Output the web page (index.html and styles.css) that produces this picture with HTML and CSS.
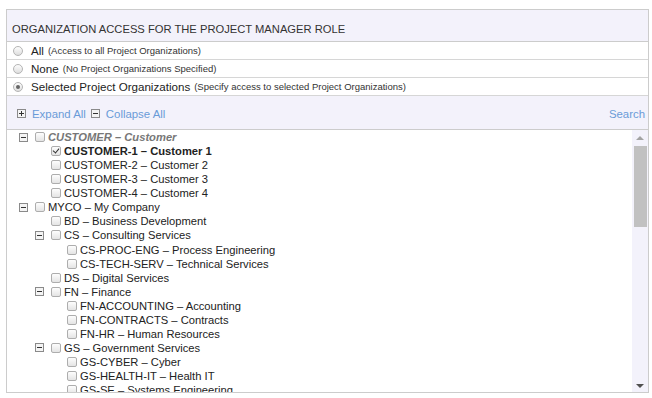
FILE: index.html
```html
<!DOCTYPE html>
<html lang="en">
<head>
  <meta charset="UTF-8">
  <title>Organization Access</title>
  <link rel="stylesheet" href="styles.css">
</head>
<body>
  <div class="access-box">
    <div class="access-header">Organization Access for the Project Manager Role</div>

    <div class="radio-row"><span class="radio"></span><span class="label">All</span><span class="hint">(Access to all Project Organizations)</span></div>
    <div class="radio-row"><span class="radio"></span><span class="label">None</span><span class="hint">(No Project Organizations Specified)</span></div>
    <div class="radio-row"><span class="radio checked"></span><span class="label">Selected Project Organizations</span><span class="hint">(Specify access to selected Project Organizations)</span></div>

    <div class="toolbar">
      <span class="tool"><span class="tog plus"></span>Expand All</span>
      <span class="tool"><span class="tog"></span>Collapse All</span>
      <span class="search">Search</span>
    </div>

    <div class="tree-wrap">
      <div class="tree">
        <div class="node l0 head"><span class="tog"></span><span class="cb"></span><span class="name">CUSTOMER – Customer</span></div>
        <div class="node l1 selected"><span class="slot"></span><span class="cb on"></span><span class="name">CUSTOMER-1 – Customer 1</span></div>
        <div class="node l1"><span class="slot"></span><span class="cb"></span><span class="name">CUSTOMER-2 – Customer 2</span></div>
        <div class="node l1"><span class="slot"></span><span class="cb"></span><span class="name">CUSTOMER-3 – Customer 3</span></div>
        <div class="node l1"><span class="slot"></span><span class="cb"></span><span class="name">CUSTOMER-4 – Customer 4</span></div>
        <div class="node l0"><span class="tog"></span><span class="cb"></span><span class="name">MYCO – My Company</span></div>
        <div class="node l1"><span class="slot"></span><span class="cb"></span><span class="name">BD – Business Development</span></div>
        <div class="node l1"><span class="tog"></span><span class="cb"></span><span class="name">CS – Consulting Services</span></div>
        <div class="node l2"><span class="slot"></span><span class="cb"></span><span class="name">CS-PROC-ENG – Process Engineering</span></div>
        <div class="node l2"><span class="slot"></span><span class="cb"></span><span class="name">CS-TECH-SERV – Technical Services</span></div>
        <div class="node l1"><span class="slot"></span><span class="cb"></span><span class="name">DS – Digital Services</span></div>
        <div class="node l1"><span class="tog"></span><span class="cb"></span><span class="name">FN – Finance</span></div>
        <div class="node l2"><span class="slot"></span><span class="cb"></span><span class="name">FN-ACCOUNTING – Accounting</span></div>
        <div class="node l2"><span class="slot"></span><span class="cb"></span><span class="name">FN-CONTRACTS – Contracts</span></div>
        <div class="node l2"><span class="slot"></span><span class="cb"></span><span class="name">FN-HR – Human Resources</span></div>
        <div class="node l1"><span class="tog"></span><span class="cb"></span><span class="name">GS – Government Services</span></div>
        <div class="node l2"><span class="slot"></span><span class="cb"></span><span class="name">GS-CYBER – Cyber</span></div>
        <div class="node l2"><span class="slot"></span><span class="cb"></span><span class="name">GS-HEALTH-IT – Health IT</span></div>
        <div class="node l2"><span class="slot"></span><span class="cb"></span><span class="name">GS-SE – Systems Engineering</span></div>
      </div>
      <div class="scrollbar">
        <span class="arrow up"></span>
        <div class="track"><div class="thumb"></div></div>
        <span class="arrow down"></span>
      </div>
    </div>
  </div>
</body>
</html>
```

FILE: styles.css
```css
/* Global Styles */
* {
  margin: 0;
  padding: 0;
  box-sizing: border-box;
}

body {
  background: #fff;
  font-family: 'Liberation Sans', Arial, sans-serif;
  color: #333;
  padding: 9px 4px 0 6px;
}

.access-box {
  width: 643px;
  border: 1px solid #ccc;
}

/* Header */
.access-header {
  height: 32px;
  background: #f3f2fb;
  border-bottom: 1px solid #ccc;
  padding: 12px 0 0 5px;
  font-size: 11.2px;
  line-height: 14px;
  text-transform: uppercase;
  color: #333;
}

/* Radio rows */
.radio-row {
  height: 18px;
  display: flex;
  align-items: center;
  border-bottom: 1px solid #d6d6d6;
  padding-left: 6px;
  font-size: 11.6px;
  color: #222;
}

.radio {
  width: 10px;
  height: 10px;
  border-radius: 50%;
  border: 1px solid #b4b4b4;
  background: linear-gradient(#fdfdfd, #dedede);
  margin-right: 8px;
  position: relative;
}

.radio.checked::after {
  content: '';
  position: absolute;
  left: 2px;
  top: 2px;
  width: 4px;
  height: 4px;
  border-radius: 50%;
  background: #666;
}

.label {
  margin-right: 4px;
}

.hint {
  font-size: 9.5px;
  color: #333;
}

/* Toolbar */
.toolbar {
  height: 34px;
  background: #f3f2fb;
  border-bottom: 1px solid #ccc;
  display: flex;
  align-items: center;
  padding: 2px 3px 0 10px;
  font-size: 11.4px;
  color: #6a9bd8;
}

.tool {
  display: flex;
  align-items: center;
  margin-right: 5px;
}

.tool .tog {
  margin-right: 6px;
}

.search {
  margin-left: auto;
}

/* Toggle squares */
.tog {
  width: 9px;
  height: 9px;
  border: 1px solid #8a8a8a;
  background: #f4f4f4;
  position: relative;
  flex-shrink: 0;
}

.tog::before {
  content: '';
  position: absolute;
  left: 1px;
  top: 3px;
  width: 5px;
  height: 1px;
  background: #333;
}

.tog.plus::after {
  content: '';
  position: absolute;
  left: 3px;
  top: 1px;
  width: 1px;
  height: 5px;
  background: #333;
}

/* Tree */
.tree-wrap {
  display: flex;
  height: 262px;
}

.tree {
  flex: 1;
  overflow: hidden;
  padding: 0 0 0 12px;
  background: #fff;
}

.node {
  height: 14.07px;
  display: flex;
  align-items: center;
  font-size: 11.2px;
  color: #222;
  white-space: nowrap;
}

.node.l1 { padding-left: 16px; }
.node.l2 { padding-left: 32px; }

.node .tog,
.node .slot {
  margin-right: 7px;
}

.slot {
  width: 9px;
  flex-shrink: 0;
}

.cb {
  width: 10px;
  height: 10px;
  border: 1px solid #adadad;
  border-radius: 2px;
  background: linear-gradient(#fdfdfd, #e4e4e4);
  margin-right: 3px;
  position: relative;
  flex-shrink: 0;
}

.cb.on::after {
  content: '';
  position: absolute;
  left: 2px;
  top: 0;
  width: 3px;
  height: 5px;
  border: solid #333;
  border-width: 0 1.5px 1.5px 0;
  transform: rotate(40deg);
}

.head .name {
  font-weight: bold;
  font-style: italic;
  color: #777;
}

.selected .name {
  font-weight: bold;
  color: #222;
}

/* Scrollbar */
.scrollbar {
  width: 16px;
  background: #f3f2fb;
  display: flex;
  flex-direction: column;
  align-items: center;
  padding: 6px 0 4px;
}

.arrow {
  width: 0;
  height: 0;
  border-left: 4px solid transparent;
  border-right: 4px solid transparent;
}

.arrow.up {
  border-bottom: 4px solid #a3a3a3;
}

.arrow.down {
  border-top: 4px solid #505050;
}

.track {
  flex: 1;
  width: 100%;
  padding: 6px 1px 0 2px;
}

.thumb {
  height: 81px;
  background: #c1c1c1;
}
```
